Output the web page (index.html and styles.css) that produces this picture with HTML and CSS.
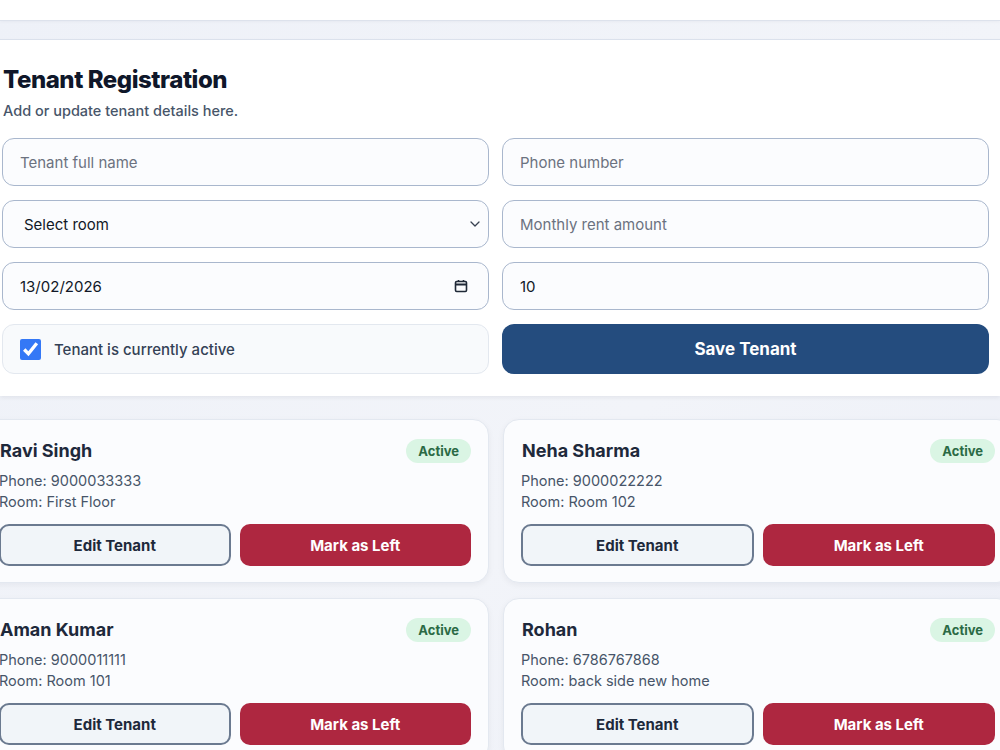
FILE: index.html
```html
<!DOCTYPE html>
<html lang="en">
<head>
    <meta charset="UTF-8">
    <meta name="viewport" content="width=device-width, initial-scale=1.0">
    <title>Tenant Registration</title>
    <link rel="stylesheet" href="styles.css">
</head>
<body>
    <div class="topbar"></div>

    <section class="panel">
        <h1>Tenant Registration</h1>
        <p class="subtitle">Add or update tenant details here.</p>

        <form class="tenant-form">
            <input type="text" class="field" placeholder="Tenant full name">
            <input type="text" class="field" placeholder="Phone number">
            <div class="select-wrap">
                <select class="field select-field">
                    <option>Select room</option>
                    <option>First Floor</option>
                    <option>Room 101</option>
                    <option>Room 102</option>
                    <option>back side new home</option>
                </select>
                <svg class="chevron" width="10" height="6" viewBox="0 0 10 6" fill="none" stroke="#374151" stroke-width="1.3" stroke-linecap="round" stroke-linejoin="round">
                    <polyline points="1,1 5,5 9,1"/>
                </svg>
            </div>
            <input type="number" class="field" placeholder="Monthly rent amount">
            <div class="field date-field">
                <input type="text" class="date-input" value="13/02/2026">
                <svg class="cal-icon" width="14" height="14" viewBox="0 0 14 14" fill="none" stroke="#1f2937" stroke-width="1.6">
                    <rect x="1.5" y="2.5" width="11" height="10" rx="1.2"/>
                    <line x1="1.5" y1="5.5" x2="12.5" y2="5.5" stroke-width="2"/>
                    <line x1="4.5" y1="1" x2="4.5" y2="3"/>
                    <line x1="9.5" y1="1" x2="9.5" y2="3"/>
                </svg>
            </div>
            <input type="number" class="field" value="10">
            <label class="active-box">
                <input type="checkbox" checked>
                <span>Tenant is currently active</span>
            </label>
            <button type="submit" class="save-btn">Save Tenant</button>
        </form>
    </section>

    <section class="tenant-list">
        <div class="tenant-card">
            <div class="card-head">
                <h3>Ravi Singh</h3>
                <span class="badge">Active</span>
            </div>
            <p class="meta">Phone: 9000033333</p>
            <p class="meta">Room: First Floor</p>
            <div class="card-actions">
                <button class="edit-btn">Edit Tenant</button>
                <button class="left-btn">Mark as Left</button>
            </div>
        </div>
        <div class="tenant-card">
            <div class="card-head">
                <h3>Neha Sharma</h3>
                <span class="badge">Active</span>
            </div>
            <p class="meta">Phone: 9000022222</p>
            <p class="meta">Room: Room 102</p>
            <div class="card-actions">
                <button class="edit-btn">Edit Tenant</button>
                <button class="left-btn">Mark as Left</button>
            </div>
        </div>
        <div class="tenant-card">
            <div class="card-head">
                <h3>Aman Kumar</h3>
                <span class="badge">Active</span>
            </div>
            <p class="meta">Phone: 9000011111</p>
            <p class="meta">Room: Room 101</p>
            <div class="card-actions">
                <button class="edit-btn">Edit Tenant</button>
                <button class="left-btn">Mark as Left</button>
            </div>
        </div>
        <div class="tenant-card">
            <div class="card-head">
                <h3>Rohan</h3>
                <span class="badge">Active</span>
            </div>
            <p class="meta">Phone: 6786767868</p>
            <p class="meta">Room: back side new home</p>
            <div class="card-actions">
                <button class="edit-btn">Edit Tenant</button>
                <button class="left-btn">Mark as Left</button>
            </div>
        </div>
    </section>
</body>
</html>
```

FILE: styles.css
```css
* {
    box-sizing: border-box;
}
body {
    margin: 0;
    font-family: Inter, "Noto Sans", Arial, sans-serif;
    background: linear-gradient(135deg, #eef1f8 0%, #f2f4f9 60%, #eceff7 100%);
    color: #0f172a;
    overflow: hidden;
    height: 750px;
}
.topbar {
    height: 21px;
    background: #ffffff;
    border-bottom: 1px solid #dde2ec;
    box-shadow: 0 1px 3px rgba(15, 23, 42, 0.04);
}
.panel {
    margin-top: 18px;
    background: #ffffff;
    border-top: 1px solid #dbe1ec;
    padding: 25px 11px 22px 2px;
    box-shadow: 0 2px 4px rgba(15, 23, 42, 0.06);
}
h1 {
    margin: 0 0 0 1px;
    font-size: 24px;
    line-height: 30px;
    font-weight: 800;
    letter-spacing: -0.45px;
    color: #0f172a;
}
.subtitle {
    margin: 6px 0 0 1px;
    font-size: 14.5px;
    line-height: 20px;
    font-weight: 500;
    color: #475569;
}
.tenant-form {
    margin-top: 17px;
    display: grid;
    grid-template-columns: 487px 487px;
    column-gap: 13px;
    row-gap: 14px;
}
.field {
    height: 48px;
    width: 100%;
    border: 1px solid #a9b7cd;
    border-radius: 12px;
    background: #fbfcfe;
    padding: 0 17px;
    font-family: inherit;
    font-size: 15px;
    color: #111827;
    outline: none;
}
.field::placeholder {
    color: #6b7280;
}
.select-wrap {
    position: relative;
}
.select-field {
    appearance: none;
    -webkit-appearance: none;
    padding-left: 21px;
    color: #111827;
}
.chevron {
    position: absolute;
    right: 9px;
    top: 21px;
    pointer-events: none;
}
.date-field {
    display: flex;
    align-items: center;
    justify-content: space-between;
    padding-right: 20px;
}
.date-input {
    border: none;
    background: transparent;
    font-family: inherit;
    font-size: 15px;
    color: #111827;
    padding: 0;
    outline: none;
    flex: 1;
}
.cal-icon {
    display: block;
}
.active-box {
    display: flex;
    align-items: center;
    gap: 13px;
    height: 50px;
    padding-left: 17px;
    background: #f8fafc;
    border: 1px solid #e3e8ef;
    border-radius: 12px;
    font-size: 15px;
    font-weight: 500;
    color: #334155;
}
.active-box input {
    margin: 0;
    width: 21px;
    height: 21px;
    accent-color: #3478f6;
}
.save-btn {
    height: 50px;
    border: none;
    border-radius: 12px;
    background: #244c7e;
    color: #ffffff;
    font-family: inherit;
    font-size: 17px;
    font-weight: 700;
    cursor: pointer;
}
.tenant-list {
    margin: 23px 0 0 -19px;
    display: grid;
    grid-template-columns: 508px 510px;
    column-gap: 14px;
    row-gap: 15px;
}
.tenant-card {
    background: #fbfcfe;
    border: 1px solid #e3e8f0;
    border-radius: 16px;
    padding: 19px 17px 16px 17px;
    box-shadow: 0 2px 6px rgba(15, 23, 42, 0.05);
}
.card-head {
    display: flex;
    justify-content: space-between;
    align-items: center;
}
.card-head h3 {
    margin: 0 0 0 1px;
    font-size: 18px;
    line-height: 24px;
    font-weight: 700;
    color: #1e293b;
}
.badge {
    height: 24px;
    line-height: 24px;
    padding: 0 12px;
    border-radius: 12px;
    background: #daf5e4;
    color: #2b6a45;
    font-size: 13px;
    font-weight: 700;
}
.meta {
    margin: 0;
    font-size: 14.5px;
    line-height: 21px;
    color: #475569;
}
.card-head + .meta {
    margin-top: 7px;
}
.card-actions {
    margin-top: 12px;
    display: grid;
    grid-template-columns: 1fr 1fr;
    gap: 9px;
}
.edit-btn, .left-btn {
    height: 42px;
    border-radius: 10px;
    font-family: inherit;
    font-size: 15px;
    font-weight: 700;
    cursor: pointer;
}
.edit-btn {
    background: #f1f5f9;
    border: 2px solid #6b7a90;
    color: #1e293b;
}
.left-btn {
    background: #ae2740;
    border: none;
    color: #ffffff;
}
```
